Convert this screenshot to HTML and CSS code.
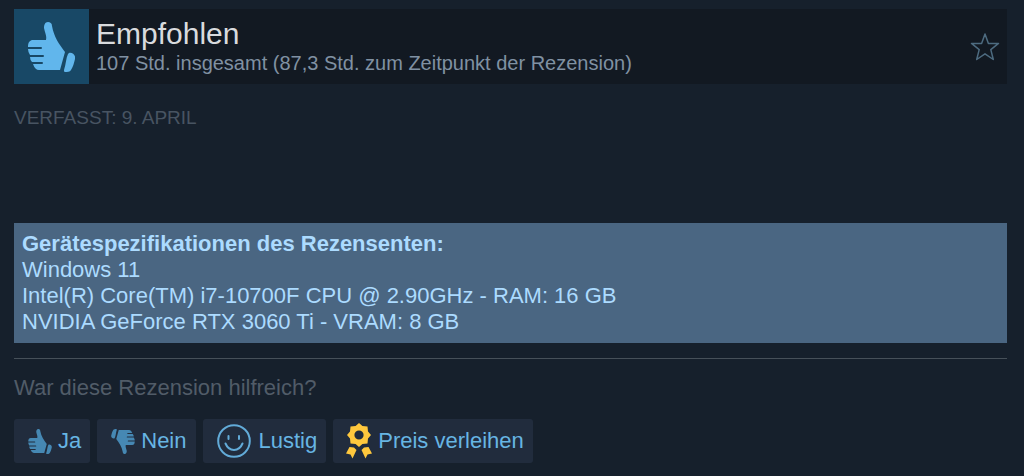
FILE: index.html
```html
<!DOCTYPE html>
<html lang="de">
<head>
  <meta charset="UTF-8" />
  <meta name="viewport" content="width=device-width, initial-scale=1.0"/>
  <title>Rezension</title>
  <link rel="stylesheet" href="styles.css">
</head>
<body>
  <svg class="sprite" aria-hidden="true">
    <symbol id="thumb" viewBox="14 11 47 50">
      <path d="M34 11C31 11 30 14 30 17C31 22 33 25 32 29H19C16 29 14 31 14 36H27Q28 36 28 37Q28 38 27 38H14Q14 41 16 44H29Q30 44 30 45Q30 46 29 46H16Q16 49 18 51H28Q29 51 29 52Q29 53 28 53H19Q21 59 25 59H46L51 41C45 33 40 26 38 15C38 12 36 11 34 11Z"/>
      <path d="M55 42C58 41 62 44 61 48C60 52 59 56 57 59C56 61 53 61 51 61C50 61 50 60 50 59C52 53 52 47 54 43Z"/>
    </symbol>
  </svg>

  <div class="review">
    <header class="header">
      <div class="thumb-box"><svg><use href="#thumb"/></svg></div>
      <div class="header-text">
        <h1>Empfohlen</h1>
        <p>107 Std. insgesamt (87,3 Std. zum Zeitpunkt der Rezension)</p>
      </div>
      <button class="star" aria-label="Merken">
        <svg viewBox="0 0 30 30"><path d="M15 2L18.4 11.4H28.5L20.8 17.6L23.3 27.5L15 21.8L6.7 27.5L9.2 17.6L1.5 11.4H11.6Z"/></svg>
      </button>
    </header>

    <div class="posted">VERFASST: 9. APRIL</div>

    <section class="specs">
      <strong>Gerätespezifikationen des Rezensenten:</strong>
      <div>Windows 11</div>
      <div>Intel(R) Core(TM) i7-10700F CPU @ 2.90GHz - RAM: 16 GB</div>
      <div>NVIDIA GeForce RTX 3060 Ti - VRAM: 8 GB</div>
    </section>

    <footer class="footer">
      <p>War diese Rezension hilfreich?</p>
      <div class="controls">
        <button><svg class="icon-thumb" aria-hidden="true"><use href="#thumb"/></svg>Ja</button>
        <button><svg class="icon-thumb down" aria-hidden="true"><use href="#thumb"/></svg>Nein</button>
        <button class="funny">
          <svg class="icon-smile" viewBox="0 0 34 34" aria-hidden="true">
            <circle cx="17" cy="17" r="15.8"/>
            <path d="M11.500 12V15M22 12V15M8.500 19.500C12 28 22 28 25.500 19.500"/>
          </svg>Lustig</button>
        <button class="award">
          <svg class="icon-award" viewBox="0 0 26 36" aria-hidden="true">
            <path fill-rule="evenodd" d="M13 0L16.400 3L21.500 3.500L22 8.500L25 12L22 15.500L21.500 20.500L16.400 21L13 24L9.600 21L4.500 20.500L4 15.500L1 12L4 8.500L4.500 3.500L9.600 3ZM13 7.400A4.600 4.600 0 1 0 13 16.600A4.600 4.600 0 1 0 13 7.400Z"/>
            <path d="M3.500 24L8 24.500L10.500 27L6.500 35.500L4.500 31.500L0 30.500ZM22.500 24L18 24.500L15.500 27L19.500 35.500L21.500 31.500L26 30.500Z"/>
          </svg>Preis verleihen</button>
      </div>
    </footer>
  </div>
</body>
</html>
```
FILE: styles.css
```css
body { margin: 0; background: #16202c; font-family: "Liberation Sans", Arial, sans-serif; font-size: 22px; line-height: 26px; }
h1, p { margin: 0; font-weight: normal; }
button { border: none; font: inherit; cursor: pointer; }
.sprite { display: none; }
.review { padding: 9px 17px 12px 14px; }

.header { display: flex; align-items: center; background: #121922; }
.thumb-box { display: flex; align-items: center; justify-content: center; width: 75px; height: 75px; background: #184866; }
.thumb-box svg { width: 47px; height: 50px; fill: #61b6ec; }
.header-text { flex: 1; padding-left: 7px; }
.header-text h1 { font-size: 30px; line-height: 32px; color: #d9dbde; }
.header-text p { font-size: 20px; color: #8091a2; }
.star { padding: 0; margin-right: 7px; background: none; }
.star svg { display: block; width: 30px; height: 30px; fill: none; stroke: #4d6b80; stroke-width: 1.5; stroke-linejoin: round; }

.posted { margin-top: 21px; font-size: 19px; color: #485462; }

.specs { margin-top: 92px; padding: 8px; background: #4a6682; color: #acdbff; }
.specs strong { display: block; }

.footer { margin-top: 15px; padding-top: 16px; border-top: 1px solid #465059; color: #515c68; }
.controls { display: flex; flex-wrap: wrap; gap: 7px; margin-top: 18px; }
.controls button { display: flex; align-items: center; height: 44px; padding: 0 9px 0 14px; gap: 6px; border-radius: 3px; background: #212c3d; color: #67b5e3; }
.icon-thumb { width: 24px; height: 25px; fill: #4688b3; }
.icon-thumb.down { transform: rotate(180deg); }
.icon-smile { width: 34px; height: 34px; fill: none; stroke: #62abd8; stroke-width: 2; stroke-linecap: round; }
.icon-award { width: 26px; height: 36px; fill: #ffc83d; }
.controls .funny { gap: 8px; }
.controls .award { padding-left: 13px; }
```
